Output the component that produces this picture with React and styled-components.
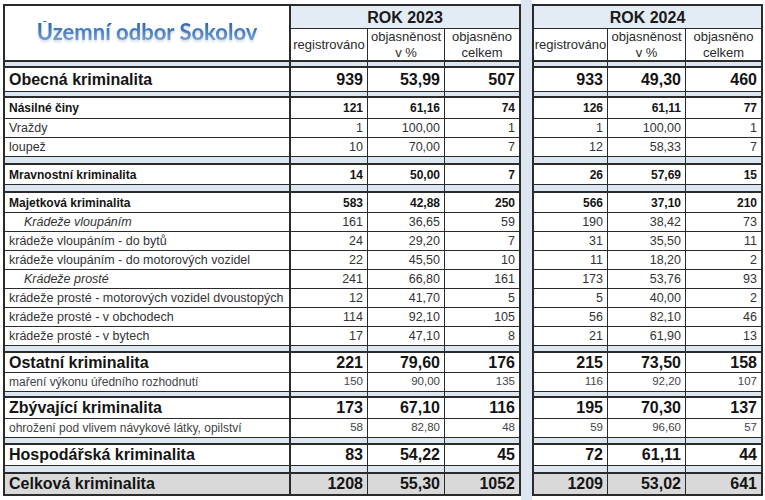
import React from "react";
import styled, { createGlobalStyle } from "styled-components";

const GlobalStyle = createGlobalStyle`
  html, body {
    margin: 0;
    padding: 0;
    background: #ffffff;
  }
  body {
    font-family: "Liberation Sans", Arial, sans-serif;
    color: #1a1a1a;
  }
`;

const SPACER_BG = "#dce6f1";
const LINE = "#2b2b2b";

const ROWS = [
  { type: "spacer", h: 6 },
  { type: "major", h: 24, label: "Obecná kriminalita", a: ["939", "53,99", "507"], b: ["933", "49,30", "460"] },
  { type: "spacer", h: 6 },
  { type: "bold", h: 21, label: "Násilné činy", a: ["121", "61,16", "74"], b: ["126", "61,11", "77"] },
  { type: "plain", h: 19, label: "Vraždy", a: ["1", "100,00", "1"], b: ["1", "100,00", "1"] },
  { type: "plain", h: 19, label: "loupež", a: ["10", "70,00", "7"], b: ["12", "58,33", "7"] },
  { type: "spacer", h: 8 },
  { type: "bold", h: 20, label: "Mravnostní kriminalita", a: ["14", "50,00", "7"], b: ["26", "57,69", "15"] },
  { type: "spacer", h: 8 },
  { type: "bold", h: 20, label: "Majetková kriminalita", a: ["583", "42,88", "250"], b: ["566", "37,10", "210"] },
  { type: "italic", h: 19, label: "Krádeže vloupáním", a: ["161", "36,65", "59"], b: ["190", "38,42", "73"] },
  { type: "plain", h: 19, label: "krádeže vloupáním - do bytů", a: ["24", "29,20", "7"], b: ["31", "35,50", "11"] },
  { type: "plain", h: 19, label: "krádeže vloupáním - do motorových vozidel", a: ["22", "45,50", "10"], b: ["11", "18,20", "2"] },
  { type: "italic", h: 19, label: "Krádeže prosté", a: ["241", "66,80", "161"], b: ["173", "53,76", "93"] },
  { type: "plain", h: 19, label: "krádeže prosté - motorových vozidel dvoustopých", a: ["12", "41,70", "5"], b: ["5", "40,00", "2"] },
  { type: "plain", h: 19, label: "krádeže prosté - v obchodech", a: ["114", "92,10", "105"], b: ["56", "82,10", "46"] },
  { type: "plain", h: 19, label: "krádeže prosté - v bytech", a: ["17", "47,10", "8"], b: ["21", "61,90", "13"] },
  { type: "spacer", h: 7 },
  { type: "major", h: 20, label: "Ostatní kriminalita", a: ["221", "79,60", "176"], b: ["215", "73,50", "158"] },
  { type: "small", h: 19, label: "maření výkonu úředního rozhodnutí", a: ["150", "90,00", "135"], b: ["116", "92,20", "107"] },
  { type: "spacer", h: 6 },
  { type: "major", h: 21, label: "Zbývající kriminalita", a: ["173", "67,10", "116"], b: ["195", "70,30", "137"] },
  { type: "small", h: 19, label: "ohrožení pod vlivem návykové látky, opilství", a: ["58", "82,80", "48"], b: ["59", "96,60", "57"] },
  { type: "spacer", h: 7 },
  { type: "major", h: 21, label: "Hospodářská kriminalita", a: ["83", "54,22", "45"], b: ["72", "61,11", "44"] },
  { type: "spacer", h: 8 },
  { type: "total", h: 20, label: "Celková kriminalita", a: ["1208", "55,30", "1052"], b: ["1209", "53,02", "641"] },
];

const ROW_TEMPLATE = ["23px", "33px", ...ROWS.map((r) => r.h + "px")].join(" ");

// text style per row kind: label size/weight, number size/weight, colour
const STYLE = {
  major: { ls: 16, lw: 700, ns: 16, nw: 700, color: "#141414" },
  bold: { ls: 12, lw: 700, ns: 12, nw: 700, color: "#141414" },
  plain: { ls: 12.5, lw: 400, ns: 12.5, nw: 400, color: "#333" },
  italic: { ls: 12.5, lw: 400, ns: 12.5, nw: 400, color: "#333" },
  small: { ls: 12, lw: 400, ns: 11.5, nw: 400, color: "#444" },
  total: { ls: 16, lw: 700, ns: 16, nw: 700, color: "#141414" },
  spacer: {},
};

const Sheet = styled.div`
  display: flex;
  align-items: stretch;
  height: 500px;
  padding-left: 3px;
  box-sizing: border-box;
  overflow: hidden;
`;

const Table = styled.div`
  display: grid;
  grid-template-columns: ${({ $cols }) => $cols};
  grid-template-rows: ${ROW_TEMPLATE};
  border: 2px solid ${LINE};
  margin-top: 4px;
  align-self: flex-start;
  background: #fff;
`;

const Gap = styled.div`
  width: 11px;
  background: ${SPACER_BG};
`;

const Cell = styled.div`
  box-sizing: border-box;
  display: flex;
  align-items: center;
  justify-content: ${({ $align }) => $align || "flex-end"};
  padding: ${({ $indent }) => `0 4px 0 ${$indent || 4}px`};
  border-right: ${({ $right }) => ($right === 0 ? "none" : `${$right || 1}px solid ${LINE}`)};
  border-bottom: ${({ $bottom }) => ($bottom === 0 ? "none" : `${$bottom || 1}px solid ${LINE}`)};
  background: ${({ $bg }) => $bg || "#fff"};
  font-size: ${({ $size }) => $size || 12}px;
  font-weight: ${({ $weight }) => $weight || 400};
  font-style: ${({ $italic }) => ($italic ? "italic" : "normal")};
  color: ${({ $color }) => $color || "#1a1a1a"};
  white-space: nowrap;
  line-height: 1;
  overflow: hidden;
`;

const TitleCell = styled(Cell)`
  grid-row: span 2;
  justify-content: center;
  padding-bottom: 2px;
`;

const TitleText = styled.span`
  font-family: Lato, "Open Sans", sans-serif;
  font-size: 22px;
  font-weight: 700;
  background: linear-gradient(180deg, #2f5f9f 0%, #4f83c2 55%, #86acd8 100%);
  -webkit-background-clip: text;
  background-clip: text;
  color: transparent;
  filter: drop-shadow(0 2px 1px rgba(120, 150, 200, 0.35));
`;

const YearCell = styled(Cell)`
  grid-column: span 3;
  justify-content: center;
  background: #e3ebf5;
  font-size: 16px;
  font-weight: 700;
  padding-top: 2px;
`;

const SubHead = styled(Cell)`
  flex-direction: column;
  justify-content: center;
  align-items: center;
  text-align: center;
  font-size: 13px;
  line-height: 16px;
  color: #2a2a2a;
  padding: 0 1px;
`;

const bgFor = (type) => (type === "spacer" ? SPACER_BG : type === "total" ? "#d9d9d9" : "#fff");

const bottomFor = (rows, i) => {
  if (i === rows.length - 1) return 0;
  if (rows[i].type === "spacer") return 2;
  return 1;
};

const NumberCells = ({ row, values, index }) => {
  const s = STYLE[row.type];
  return [0, 1, 2].map((k) => (
    <Cell
      key={k}
      $bg={bgFor(row.type)}
      $bottom={bottomFor(ROWS, index)}
      $right={k === 2 ? 0 : 1}
      $size={s.ns}
      $weight={s.nw}
      $color={s.color}
    >
      {values ? values[k] : ""}
    </Cell>
  ));
};

const Headers = () => (
  <>
    <SubHead $bottom={2}>registrováno</SubHead>
    <SubHead $bottom={2}>
      <span>objasněnost</span>
      <span>v %</span>
    </SubHead>
    <SubHead $bottom={2} $right={0}>
      <span>objasněno</span>
      <span>celkem</span>
    </SubHead>
  </>
);

export default function App() {
  return (
    <>
      <GlobalStyle />
      <Sheet>
        <Table $cols="286px 77px 77px 74px">
          <TitleCell $right={2} $bottom={2}>
            <TitleText>Územní odbor Sokolov</TitleText>
          </TitleCell>
          <YearCell $right={0}>ROK 2023</YearCell>
          <Headers />
          {ROWS.map((row, i) => {
            const s = STYLE[row.type];
            return (
              <React.Fragment key={i}>
                <Cell
                  $align="flex-start"
                  $indent={row.type === "italic" ? 19 : 4}
                  $bg={bgFor(row.type)}
                  $bottom={bottomFor(ROWS, i)}
                  $right={2}
                  $size={s.ls}
                  $weight={s.lw}
                  $italic={row.type === "italic"}
                  $color={s.color}
                >
                  {row.label || ""}
                </Cell>
                <NumberCells row={row} values={row.a} index={i} />
              </React.Fragment>
            );
          })}
        </Table>
        <Gap />
        <Table $cols="74px 78px 75px">
          <YearCell $right={0}>ROK 2024</YearCell>
          <Headers />
          {ROWS.map((row, i) => (
            <NumberCells key={i} row={row} values={row.b} index={i} />
          ))}
        </Table>
      </Sheet>
    </>
  );
}
